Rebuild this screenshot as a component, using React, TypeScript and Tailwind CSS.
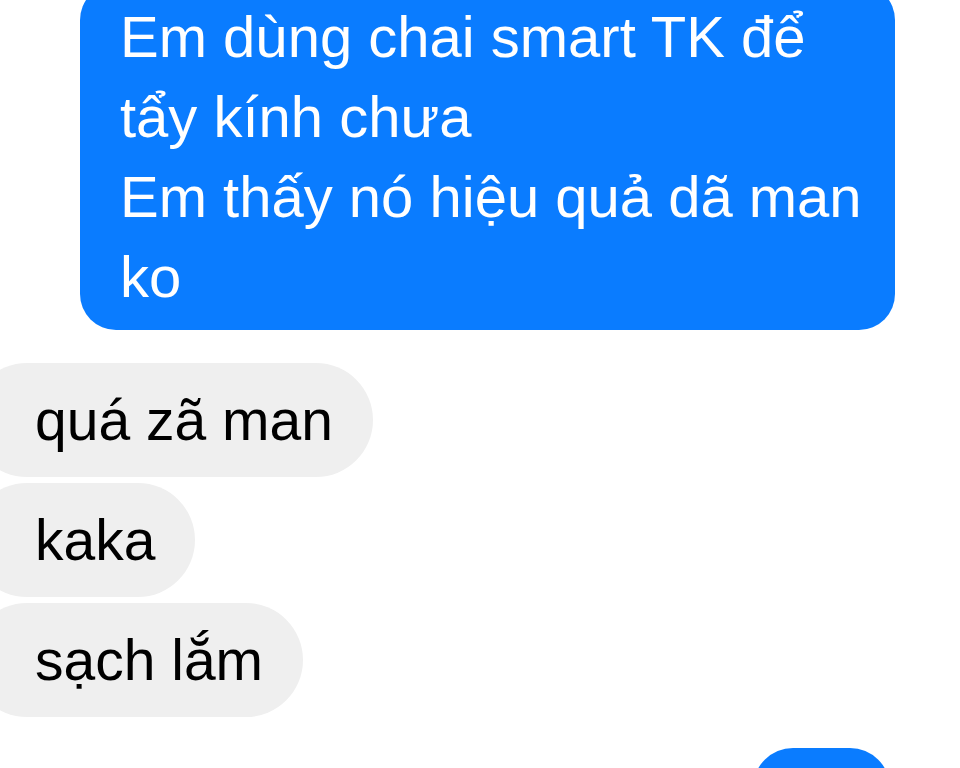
import React from "react";

const blueLines = [
  "Em dùng chai smart TK để",
  "tẩy kính chưa",
  "Em thấy nó hiệu quả dã man",
  "ko",
];

const grayMessages = ["quá zã man", "kaka", "sạch lắm"];

const App = () => {
  return (
    <div
      className="h-[768px] w-[960px] overflow-hidden bg-white"
      style={{ fontFamily: '"Liberation Sans", Arial, sans-serif' }}
    >
      <div className="flex flex-col">
        {/* tin nhắn gửi đi */}
        <div className="ml-[80px] mt-[-16px] w-[815px] rounded-[36px] bg-[#0a7cff] pb-[13px] pl-[40px] pt-[13px] text-[58px] leading-[80px] text-white">
          {blueLines.map((line, i) => (
            <div key={i} className="whitespace-nowrap">
              {line}
            </div>
          ))}
        </div>

        {/* tin nhắn nhận */}
        <div className="mt-[33px] flex flex-col items-start gap-[6px]">
          {grayMessages.map((msg, i) => (
            <div
              key={i}
              className="ml-[-30px] h-[114px] whitespace-nowrap rounded-[57px] bg-[#efefef] pl-[65px] pr-[40px] text-[57px] leading-[114px] text-black"
            >
              {msg}
            </div>
          ))}
        </div>

        <div className="mt-[31px] ml-[753px] h-[80px] w-[137px] rounded-[40px] bg-[#0a7cff]" />
      </div>
    </div>
  );
};

export default App;
